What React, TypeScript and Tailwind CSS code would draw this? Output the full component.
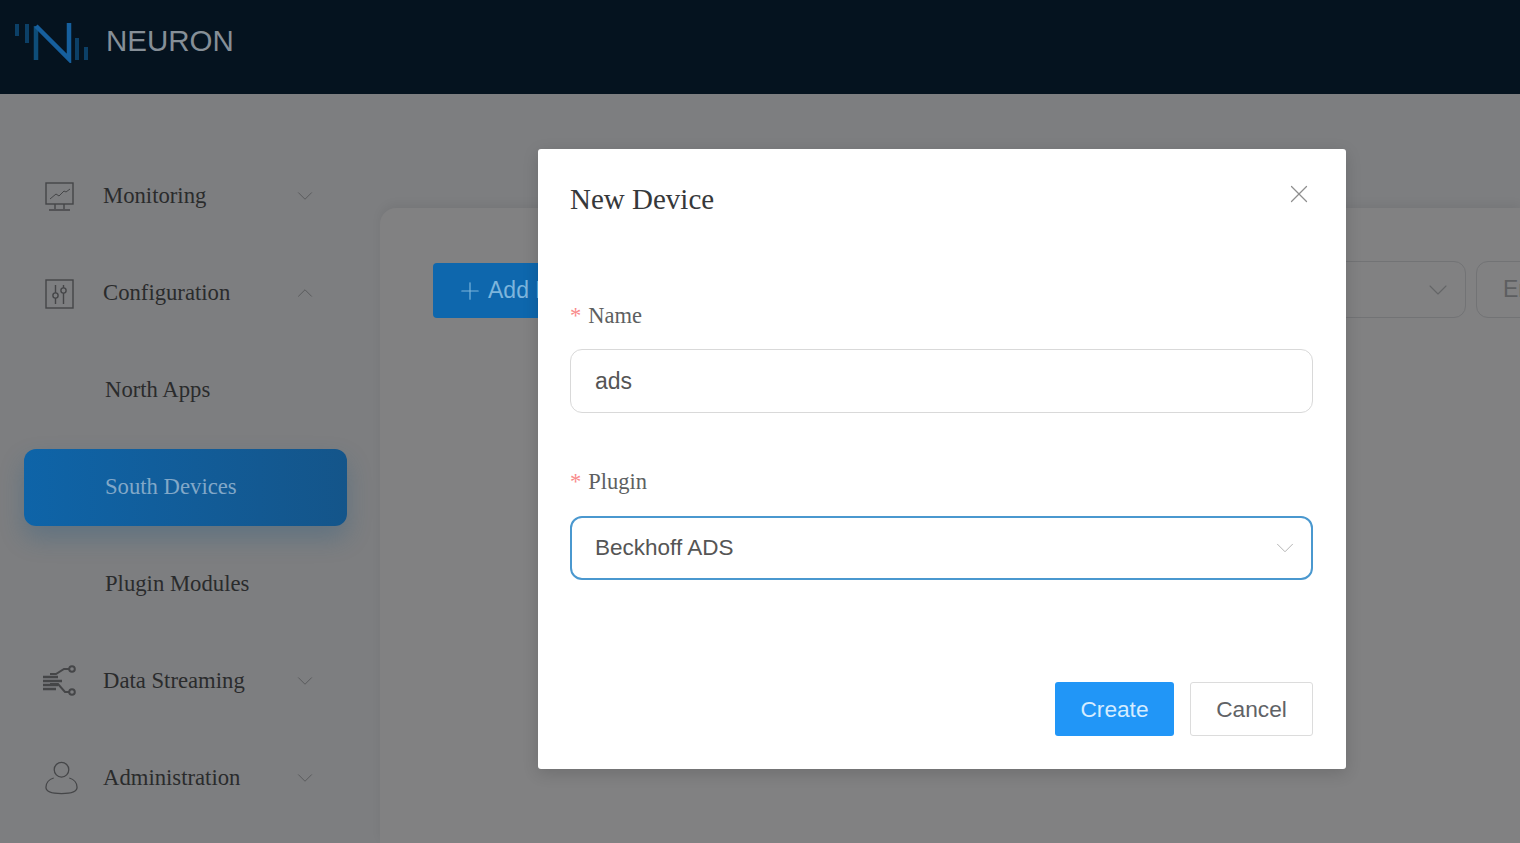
import { ChevronDown, ChevronUp, X, Plus } from "lucide-react";

const serif = "font-['Liberation_Serif',serif]";

function MonitorIcon() {
  return (
    <svg width="32" height="32" viewBox="0 0 32 32" fill="none" stroke="#454648" strokeWidth="1.4">
      <rect x="2" y="2" width="27" height="21" />
      <path d="M6 18l6-5 3 2 5-5 2 1 4-3" strokeWidth="1" />
      <path d="M11 23v5M20 23v5M5 29h21" />
    </svg>
  );
}

function SlidersIcon() {
  return (
    <svg width="30" height="30" viewBox="0 0 30 30" fill="none" stroke="#454648" strokeWidth="1.4" className="ml-px">
      <rect x="1" y="1" width="27" height="28" />
      <path d="M10.500 6v8M10.500 19v6M18.500 6v3M18.500 14v11" />
      <circle cx="10.500" cy="16.500" r="2.600" />
      <circle cx="18.500" cy="11.500" r="2.600" />
    </svg>
  );
}

function StreamIcon() {
  return (
    <svg width="36" height="34" viewBox="0 0 36 34" fill="none" stroke="#454648" strokeWidth="2" className="-ml-[2px]">
      <path d="M1 12h15M1 16h19M1 20h15M1 24h13" strokeWidth="2.600" />
      <path d="M8 9h6l8-5h6M8 19h8l7 8h5" />
      <circle cx="30" cy="4" r="2.800" />
      <circle cx="30" cy="27" r="2.800" />
    </svg>
  );
}

function UserIcon() {
  return (
    <svg width="35" height="35" viewBox="0 0 36 36" fill="none" stroke="#454648" strokeWidth="1.300" className="-mt-[3px]">
      <circle cx="18" cy="10" r="7.500" />
      <path d="M10 18.500C5 20 2 24 2 28c0 4 6 6.500 16 6.500s16-2.500 16-6.500c0-4-3-8-8-9.500" />
    </svg>
  );
}

function Logo() {
  return (
    <svg width="76" height="44" viewBox="0 0 76 44" fill="none">
      <path d="M3 5v12M13 5v19" stroke="#0c4067" strokeWidth="4" />
      <path d="M22 41V7" stroke="#0e4d78" strokeWidth="4.500" />
      <path d="M22 7l33 33V4" stroke="#165f9d" strokeWidth="4.500" />
      <path d="M63 19v22M72 28v13" stroke="#0c4067" strokeWidth="4" />
    </svg>
  );
}

const navBefore = [
  { name: "Monitoring", icon: <MonitorIcon />, up: false },
  { name: "Configuration", icon: <SlidersIcon />, up: true },
];

const subItems = ["North Apps", "South Devices", "Plugin Modules"];

const navAfter = [
  { name: "Data Streaming", icon: <StreamIcon />, up: false },
  { name: "Administration", icon: <UserIcon />, up: false },
];

function NavRow({ name, icon, up }: { name: string; icon: React.ReactNode; up: boolean }) {
  return (
    <div className="ml-6 flex h-[77px] w-[323px] items-center pl-5 pr-[29px]">
      <div className="flex w-[59px] shrink-0 items-center justify-start">{icon}</div>
      <span className={`${serif} flex-1 text-[22.700px] text-[#2a2b2c]`}>{name}</span>
      {up ? (
        <ChevronUp size={26} strokeWidth={0.900} className="mb-[2px] text-[#58595b]" />
      ) : (
        <ChevronDown size={26} strokeWidth={0.900} className="mb-[2px] text-[#58595b]" />
      )}
    </div>
  );
}

export default function App() {
  return (
    <div className="relative flex h-[843px] flex-col overflow-hidden bg-[#7d7e80] font-['Liberation_Sans',sans-serif]">
      <header className="flex h-[94px] shrink-0 items-start bg-[#05131f] pl-[14px] pt-[19px]">
        <Logo />
        <span className="ml-4 mt-[1px] text-[29.500px] leading-[42px] text-[#868f97]">NEURON</span>
      </header>

      <div className="flex flex-1">
        <aside className="w-[380px] shrink-0 pt-[64px]">
          <nav className="flex flex-col gap-5">
            {navBefore.map((n) => (
              <NavRow key={n.name} {...n} />
            ))}
            {subItems.map((s) => (
              <div
                key={s}
                className={`ml-6 flex h-[77px] w-[323px] items-center rounded-xl pl-[81px] ${serif} text-[22.700px] ${
                  s === "South Devices"
                    ? "bg-gradient-to-r from-[#0e64a8] to-[#14558a] text-[#82a8c8] shadow-[0_12px_24px_rgba(30,90,130,0.3)]"
                    : "text-[#2a2b2c]"
                }`}
              >
                {s}
              </div>
            ))}
            {navAfter.map((n) => (
              <NavRow key={n.name} {...n} />
            ))}
          </nav>
        </aside>

        <main className="flex-1 pt-[114px]">
          <div className="flex h-full overflow-hidden rounded-tl-2xl bg-[#818182] pl-[53px] pt-[55px] shadow-[0_-4px_10px_rgba(0,0,0,0.06)]">
            <button className="flex h-[55px] w-[220px] shrink-0 items-center gap-1 rounded bg-[#0e67ad] pl-[23px] text-[23px] text-[#7db5dc]">
              <Plus size={28} strokeWidth={1} />
              Add Device
            </button>
            <div className="-mt-[2px] ml-auto flex h-[57px] items-start gap-[10px]">
              <div className="flex h-[57px] w-[300px] items-center justify-end rounded-xl border border-[#727375] pr-[11px]">
                <ChevronDown size={32} strokeWidth={0.800} className="text-[#646567]" />
              </div>
              <div className="-mr-[60px] flex h-[57px] w-[104px] items-center rounded-xl border border-[#727375] pl-[26px] text-[23px] text-[#5d5e60]">
                En
              </div>
            </div>
          </div>
        </main>
      </div>

      <div className="absolute left-[538px] top-[149px] flex h-[620px] w-[808px] flex-col rounded-[3px] bg-white pl-8 pr-[33px] shadow-[0_4px_16px_rgba(0,0,0,0.15)]">
        <div className="flex h-[100px] items-start justify-between pt-[31px]">
          <h2 className={`${serif} text-[29px] leading-[38px] text-[#36383a]`}>New Device</h2>
          <X size={30} strokeWidth={1} className="-mr-[1px] -mt-[1px] text-[#8f8f8f]" />
        </div>

        <label className={`${serif} mt-[52px] flex h-[30px] items-center text-[22.500px] text-[#5d5f61]`}>
          <span className="mr-[7px] text-[#f98b8b]">*</span>Name
        </label>
        <div className="mt-[18px] flex h-[64px] items-center rounded-xl border border-[#d9d9d9] pl-6 text-[23px] text-[#555]">
          ads
        </div>

        <label className={`${serif} mt-[54px] flex h-[30px] items-center text-[22.500px] text-[#5d5f61]`}>
          <span className="mr-[7px] text-[#f98b8b]">*</span>Plugin
        </label>
        <div className="mt-[19px] flex h-[64px] items-center justify-between rounded-xl border-2 border-[#4a98cf] pl-[23px] pr-[11px] text-[22.500px] text-[#555]">
          Beckhoff ADS
          <ChevronDown size={30} strokeWidth={0.800} className="text-[#b5b5b5]" />
        </div>

        <div className="mt-[102px] flex justify-end gap-4">
          <button className="h-[54px] w-[119px] rounded-[3px] bg-[#2196f7] text-[22.700px] text-[#d5ecff]">Create</button>
          <button className="h-[54px] w-[123px] rounded-[3px] border border-[#dcdcdc] text-[22.700px] text-[#606266]">Cancel</button>
        </div>
      </div>
    </div>
  );
}
